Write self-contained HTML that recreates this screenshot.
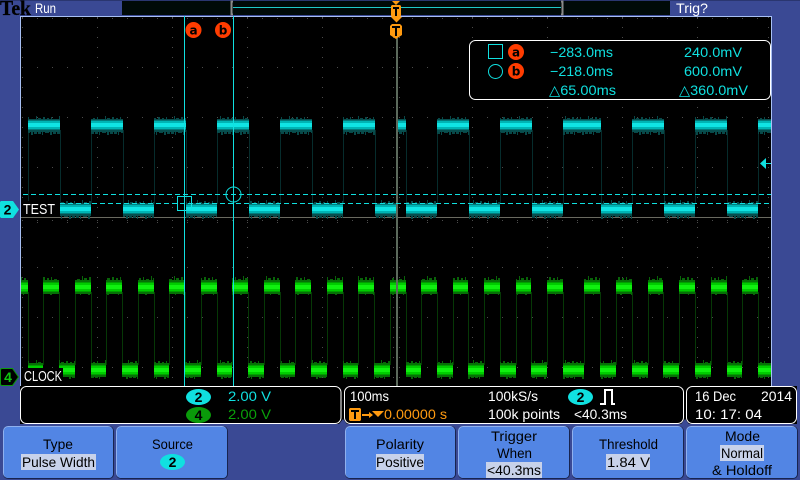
<!DOCTYPE html>
<html><head><meta charset="utf-8"><style>
html,body{margin:0;padding:0;background:#3a4994;width:800px;height:480px;overflow:hidden}
svg{display:block}
text{font-family:"Liberation Sans",sans-serif;font-size:14px}
</style></head><body>
<svg width="800" height="480" viewBox="0 0 800 480" xmlns="http://www.w3.org/2000/svg">
<defs>
<pattern id="nc" width="23" height="4" patternUnits="userSpaceOnUse"><rect x="1" y="2" width="2" height="2" fill="#084848"/><rect x="5" y="1" width="1" height="3" fill="#084848"/><rect x="8" y="3" width="3" height="1" fill="#084848"/><rect x="13" y="0" width="1" height="4" fill="#084848"/><rect x="15" y="2" width="3" height="2" fill="#084848"/><rect x="20" y="1" width="2" height="3" fill="#084848"/></pattern>
<pattern id="ncb" width="19" height="4" patternUnits="userSpaceOnUse"><rect x="0" y="0" width="3" height="2" fill="#084848"/><rect x="4" y="0" width="1" height="3" fill="#084848"/><rect x="7" y="0" width="4" height="1" fill="#084848"/><rect x="12" y="0" width="2" height="3" fill="#084848"/><rect x="15" y="0" width="3" height="2" fill="#084848"/></pattern>
<pattern id="ng" width="23" height="4" patternUnits="userSpaceOnUse"><rect x="1" y="2" width="2" height="2" fill="#086408"/><rect x="5" y="1" width="1" height="3" fill="#086408"/><rect x="8" y="3" width="3" height="1" fill="#086408"/><rect x="13" y="0" width="1" height="4" fill="#086408"/><rect x="15" y="2" width="3" height="2" fill="#086408"/><rect x="20" y="1" width="2" height="3" fill="#086408"/></pattern>
<pattern id="ngb" width="19" height="4" patternUnits="userSpaceOnUse"><rect x="0" y="0" width="3" height="2" fill="#086408"/><rect x="4" y="0" width="1" height="3" fill="#086408"/><rect x="7" y="0" width="4" height="1" fill="#086408"/><rect x="12" y="0" width="2" height="3" fill="#086408"/><rect x="15" y="0" width="3" height="2" fill="#086408"/></pattern>
<clipPath id="ch"><path d="M28 0H60V480H28ZM91 0H123V480H91ZM154 0H186V480H154ZM217 0H249V480H217ZM280 0H312V480H280ZM343 0H375V480H343ZM397 0H406V480H397ZM437 0H469V480H437ZM500 0H532V480H500ZM563 0H601V480H563ZM632 0H664V480H632ZM695 0H727V480H695ZM758 0H771V480H758Z"/></clipPath>
<clipPath id="cl"><path d="M60 0H91V480H60ZM123 0H154V480H123ZM186 0H217V480H186ZM249 0H280V480H249ZM312 0H343V480H312ZM375 0H397V480H375ZM406 0H437V480H406ZM469 0H500V480H469ZM532 0H563V480H532ZM601 0H632V480H601ZM664 0H695V480H664ZM727 0H758V480H727Z"/></clipPath>
<clipPath id="gh"><path d="M21 0H28V480H21ZM43 0H59V480H43ZM75 0H91V480H75ZM106 0H122V480H106ZM138 0H154V480H138ZM169 0H185V480H169ZM201 0H217V480H201ZM232 0H248V480H232ZM264 0H280V480H264ZM295 0H311V480H295ZM327 0H343V480H327ZM358 0H374V480H358ZM390 0H406V480H390ZM421 0H437V480H421ZM453 0H468V480H453ZM484 0H500V480H484ZM516 0H531V480H516ZM547 0H563V480H547ZM584 0H600V480H584ZM616 0H632V480H616ZM648 0H663V480H648ZM679 0H695V480H679ZM711 0H727V480H711ZM742 0H758V480H742Z"/></clipPath>
<clipPath id="gl"><path d="M28 0H43V480H28ZM59 0H75V480H59ZM91 0H106V480H91ZM122 0H138V480H122ZM154 0H169V480H154ZM185 0H201V480H185ZM217 0H232V480H217ZM248 0H264V480H248ZM280 0H295V480H280ZM311 0H327V480H311ZM343 0H358V480H343ZM374 0H390V480H374ZM406 0H421V480H406ZM437 0H453V480H437ZM468 0H484V480H468ZM500 0H516V480H500ZM531 0H547V480H531ZM563 0H584V480H563ZM600 0H616V480H600ZM632 0H648V480H632ZM663 0H679V480H663ZM695 0H711V480H695ZM727 0H742V480H727ZM758 0H771V480H758Z"/></clipPath>
</defs>

<rect width="800" height="480" fill="#3a4994"/>
<rect x="0" y="0" width="800" height="1" fill="#2a3670"/>

<!-- top record bar -->
<rect x="122" y="1" width="548" height="14" fill="#000a08"/>
<rect x="233" y="7" width="328" height="1" fill="#1fc8c8"/>
<path d="M233 1.5H231.5V14.5H233M561 1.5H562.5V14.5H561" fill="none" stroke="#8a8a8a" stroke-width="2"/>

<!-- screen -->
<rect x="20" y="16" width="752" height="371" fill="#000"/>
<rect x="20" y="16" width="752" height="1" fill="#a8c0f4"/>
<rect x="20" y="16" width="1" height="371" fill="#a8c0f4"/>
<rect x="771" y="16" width="1" height="371" fill="#a8c0f4"/>

<!-- graticule -->
<g fill="none" stroke="#4c4c4c" stroke-width="1">
<path stroke-dasharray="1 14" d="M22 18.5H771M22 67.5H771M22 117.5H771M22 167.5H771M22 267.5H771M22 317.5H771M22 367.5H771"/>
<path stroke-dasharray="1 9" d="M22.5 17V386M97.5 17V386M172.5 17V386M247.5 17V386M322.5 17V386M393.5 17V386M399.5 17V386M472.5 17V386M547.5 17V386M622.5 17V386M697.5 17V386M768.5 17V386"/>
<path stroke-dasharray="1 14" d="M22 220.5H771"/>
<path stroke-dasharray="1 29" d="M37 222.5H771"/>
</g>
<rect x="21" y="217" width="750" height="1" fill="#6a6a60"/>

<!-- edges -->
<path fill="none" stroke="#062c2c" d="M28.5 130V204M60.5 130V204M91.5 130V204M123.5 130V204M154.5 130V204M186.5 130V204M217.5 130V204M249.5 130V204M280.5 130V204M312.5 130V204M343.5 130V204M375.5 130V204M406.5 130V204M437.5 130V204M469.5 130V204M500.5 130V204M532.5 130V204M563.5 130V204M601.5 130V204M632.5 130V204M664.5 130V204M695.5 130V204M727.5 130V204M758.5 130V204"/>
<path fill="none" stroke="#063806" d="M28.5 292V365M43.5 292V365M59.5 292V365M75.5 292V365M91.5 292V365M106.5 292V365M122.5 292V365M138.5 292V365M154.5 292V365M169.5 292V365M185.5 292V365M201.5 292V365M217.5 292V365M232.5 292V365M248.5 292V365M264.5 292V365M280.5 292V365M295.5 292V365M311.5 292V365M327.5 292V365M343.5 292V365M358.5 292V365M374.5 292V365M390.5 292V365M406.5 292V365M421.5 292V365M437.5 292V365M453.5 292V365M468.5 292V365M484.5 292V365M500.5 292V365M516.5 292V365M531.5 292V365M547.5 292V365M563.5 292V365M584.5 292V365M600.5 292V365M616.5 292V365M632.5 292V365M648.5 292V365M663.5 292V365M679.5 292V365M695.5 292V365M711.5 292V365M727.5 292V365M742.5 292V365M758.5 292V365"/>

<!-- cyan high -->
<g clip-path="url(#ch)">
<rect x="20" y="116" width="752" height="4" fill="url(#nc)"/>
<rect x="20" y="132" width="752" height="4" fill="url(#ncb)"/>
<rect x="20" y="119" width="752" height="13" fill="#074e4e"/>
<rect x="20" y="120" width="752" height="10" fill="#007c7c"/>
<rect x="20" y="121" width="752" height="8" fill="#00b4b4"/>
<rect x="20" y="123" width="752" height="4" fill="#10e4e4"/>
</g>
<!-- cyan low -->
<g clip-path="url(#cl)">
<rect x="20" y="200" width="752" height="4" fill="url(#nc)"/>
<rect x="20" y="216" width="752" height="4" fill="url(#ncb)"/>
<rect x="20" y="203" width="752" height="13" fill="#074e4e"/>
<rect x="20" y="204" width="752" height="10" fill="#007c7c"/>
<rect x="20" y="205" width="752" height="8" fill="#00b4b4"/>
<rect x="20" y="207" width="752" height="4" fill="#10e4e4"/>
</g>
<!-- green high -->
<g clip-path="url(#gh)">
<rect x="21" y="276" width="750" height="4" fill="url(#ng)"/>
<rect x="21" y="292" width="750" height="4" fill="url(#ngb)"/>
<rect x="21" y="280" width="750" height="14" fill="#067006"/>
<rect x="21" y="282" width="750" height="10" fill="#00a000"/>
<rect x="21" y="283" width="750" height="8" fill="#00cc00"/>
<rect x="21" y="285" width="750" height="4" fill="#10f010"/>
</g>
<!-- green low -->
<g clip-path="url(#gl)">
<rect x="21" y="360" width="750" height="4" fill="url(#ng)"/>
<rect x="21" y="376" width="750" height="4" fill="url(#ngb)"/>
<rect x="21" y="363" width="750" height="14" fill="#067006"/>
<rect x="21" y="365" width="750" height="10" fill="#00a000"/>
<rect x="21" y="366" width="750" height="8" fill="#00cc00"/>
<rect x="21" y="368" width="750" height="4" fill="#10f010"/>
</g>

<!-- centre vertical -->
<rect x="396" y="38" width="2" height="348" fill="#5c6a5c"/>

<!-- cursors -->
<rect x="184" y="16" width="1" height="370" fill="#10e0e0"/>
<rect x="233" y="16" width="1" height="370" fill="#10e0e0"/>
<path fill="none" stroke="#10e0e0" stroke-dasharray="5 3" d="M23 194.5H771M60 203.5H771"/>
<rect x="177.5" y="196.5" width="14" height="14" fill="none" stroke="#10e0e0"/>
<circle cx="233.5" cy="194.5" r="7.5" fill="none" stroke="#10e0e0"/>

<!-- cursor badges -->
<circle cx="193.5" cy="30" r="8" fill="#ff3c00"/>
<text x="193.5" y="34.5" text-anchor="middle" style="font-family:'DejaVu Sans',sans-serif;font-size:12px;font-weight:bold" fill="#000">a</text>
<circle cx="223" cy="30" r="8" fill="#ff3c00"/>
<text x="223" y="34.5" text-anchor="middle" style="font-family:'DejaVu Sans',sans-serif;font-size:12px;font-weight:bold" fill="#000">b</text>

<!-- trigger markers -->
<path fill="#ff9a10" d="M392 1H400L396 5ZM392 5H400L401 6V16L400 17H392L391 16V6ZM391 17H402L396.5 22.5Z"/>
<path fill="#000" d="M393 7H399V9H397V16H395V9H393Z"/>
<path fill="#ff9a10" d="M392 24H400L402 26V35L396 39L390 35V26Z"/>
<path fill="#000" d="M392 26H400V28H397V36H395V28H392Z"/>

<!-- readout -->
<rect x="469.5" y="40.5" width="301" height="59" rx="6" fill="#000" stroke="#fff"/>
<rect x="488.5" y="44.5" width="14" height="14" fill="none" stroke="#10e0e0"/>
<circle cx="495.5" cy="71.5" r="7" fill="none" stroke="#10e0e0"/>
<circle cx="516" cy="52" r="8" fill="#ff3c00"/>
<text x="516" y="56.5" text-anchor="middle" style="font-family:'DejaVu Sans',sans-serif;font-size:12px;font-weight:bold" fill="#000">a</text>
<circle cx="516" cy="71" r="8" fill="#ff3c00"/>
<text x="516" y="75.5" text-anchor="middle" style="font-family:'DejaVu Sans',sans-serif;font-size:12px;font-weight:bold" fill="#000">b</text>
<g fill="#10e0e0">
<text x="550" y="57" textLength="63" lengthAdjust="spacingAndGlyphs">−283.0ms</text>
<text x="550" y="76" textLength="63" lengthAdjust="spacingAndGlyphs">−218.0ms</text>
<text x="549" y="95" textLength="67" lengthAdjust="spacingAndGlyphs">△65.00ms</text>
<text x="684" y="57" textLength="58" lengthAdjust="spacingAndGlyphs">240.0mV</text>
<text x="684" y="76" textLength="58" lengthAdjust="spacingAndGlyphs">600.0mV</text>
<text x="679" y="95" textLength="69" lengthAdjust="spacingAndGlyphs">△360.0mV</text>
</g>

<!-- trigger level arrow -->
<path fill="#10e0e0" d="M760 163.5L766 158V169ZM766 163H771V164H766Z"/>

<!-- channel labels -->
<rect x="22" y="201" width="37" height="15" fill="#000"/>
<rect x="22" y="368" width="41" height="15" fill="#000"/>
<path fill="#10e0e0" d="M1 201H13L19 209.5L13 218H1L0 217V202Z"/>
<text x="7.5" y="214.5" text-anchor="middle" style="font-size:14px;font-weight:bold" fill="#000">2</text>
<path fill="#000" stroke="#0a9a0a" d="M1.5 368.5H12.5L18.5 377L12.5 385.5H1.5L.5 384.5V369.5Z"/>
<text x="8" y="382" text-anchor="middle" style="font-size:14px;font-weight:bold" fill="#10c810">4</text>
<text x="23" y="214" textLength="32" lengthAdjust="spacingAndGlyphs" style="font-size:15px" fill="#fff">TEST</text>
<text x="24" y="381" textLength="38" lengthAdjust="spacingAndGlyphs" style="font-size:15px" fill="#fff">CLOCK</text>

<!-- status boxes -->
<rect x="20" y="386" width="777" height="38" fill="#000"/>
<rect x="20.5" y="386.5" width="320.5" height="37" rx="6" fill="#000" stroke="#fff"/>
<rect x="344.5" y="386.5" width="339" height="37" rx="6" fill="#000" stroke="#fff"/>
<rect x="686.5" y="386.5" width="110" height="37" rx="6" fill="#000" stroke="#fff"/>
<path fill="#3a4994" d="M343 419L347 424H339ZM685 419L689 424H681Z"/>
<rect x="20" y="424" width="780" height="2" fill="#3a4994"/>

<ellipse cx="198.5" cy="397" rx="12.5" ry="8" fill="#10e0e0"/>
<text x="198.5" y="402" text-anchor="middle" style="font-weight:bold" fill="#000">2</text>
<ellipse cx="198.5" cy="415" rx="12.5" ry="8" fill="#0a9a0a"/>
<text x="198.5" y="420" text-anchor="middle" style="font-weight:bold" fill="#000">4</text>
<text x="228" y="401" textLength="43" lengthAdjust="spacingAndGlyphs" fill="#10e0e0">2.00 V</text>
<text x="228" y="419" textLength="43" lengthAdjust="spacingAndGlyphs" fill="#0aa00a">2.00 V</text>

<text x="350" y="401" textLength="39" lengthAdjust="spacingAndGlyphs" fill="#fff">100ms</text>
<path fill="#ff9a10" d="M350 408H360L361 409V420L360 421H350L349 420V409Z"/>
<path fill="#000" d="M351 410H359V412H356V419H354V412H351Z"/>
<path fill="#ff9a10" d="M362 414H369V412L373 415L369 418V416H362ZM372 411H384L378 417Z"/>
<text x="384" y="419" textLength="63" lengthAdjust="spacingAndGlyphs" fill="#ff9a10">0.00000 s</text>
<text x="488" y="401" textLength="50" lengthAdjust="spacingAndGlyphs" fill="#fff">100kS/s</text>
<text x="488" y="419" textLength="72" lengthAdjust="spacingAndGlyphs" fill="#fff">100k points</text>
<ellipse cx="580.5" cy="397" rx="12.5" ry="8" fill="#10e0e0"/>
<text x="580.5" y="402" text-anchor="middle" style="font-weight:bold" fill="#000">2</text>
<path fill="none" stroke="#fff" stroke-width="2" d="M600 404H605V390H612V404H615"/>
<text x="574" y="419" textLength="53" lengthAdjust="spacingAndGlyphs" fill="#fff">&lt;40.3ms</text>

<text x="695" y="401" textLength="41" lengthAdjust="spacingAndGlyphs" fill="#fff">16 Dec</text>
<text x="761" y="401" textLength="31" lengthAdjust="spacingAndGlyphs" fill="#fff">2014</text>
<text x="695" y="419" textLength="67" lengthAdjust="spacingAndGlyphs" fill="#fff">10: 17: 04</text>

<!-- buttons -->
<g>
<rect x="3" y="426" width="111" height="53" rx="5" fill="#18244f"/><rect x="3" y="426" width="110" height="52" rx="5" fill="#8fb0ee"/><rect x="4" y="427" width="109" height="51" rx="4" fill="#5285e4"/>
<rect x="116" y="426" width="112" height="53" rx="5" fill="#18244f"/><rect x="116" y="426" width="111" height="52" rx="5" fill="#8fb0ee"/><rect x="117" y="427" width="110" height="51" rx="4" fill="#5285e4"/>
<rect x="345" y="426" width="111" height="53" rx="5" fill="#18244f"/><rect x="345" y="426" width="110" height="52" rx="5" fill="#8fb0ee"/><rect x="346" y="427" width="109" height="51" rx="4" fill="#5285e4"/>
<rect x="458" y="426" width="112" height="53" rx="5" fill="#18244f"/><rect x="458" y="426" width="111" height="52" rx="5" fill="#8fb0ee"/><rect x="459" y="427" width="110" height="51" rx="4" fill="#5285e4"/>
<rect x="572" y="426" width="112" height="53" rx="5" fill="#18244f"/><rect x="572" y="426" width="111" height="52" rx="5" fill="#8fb0ee"/><rect x="573" y="427" width="110" height="51" rx="4" fill="#5285e4"/>
<rect x="686" y="426" width="112" height="53" rx="5" fill="#18244f"/><rect x="686" y="426" width="111" height="52" rx="5" fill="#8fb0ee"/><rect x="687" y="427" width="110" height="51" rx="4" fill="#5285e4"/>
</g>
<g fill="#c8d2ea">
<rect x="21" y="454" width="75" height="16"/>
<rect x="376" y="454" width="48" height="16"/>
<rect x="486" y="462" width="56" height="16"/>
<rect x="606" y="454" width="44" height="16"/>
<rect x="720" y="445" width="44" height="16"/>
</g>
<ellipse cx="172.5" cy="462" rx="12.5" ry="8" fill="#10e0e0"/>
<text x="172.5" y="467" text-anchor="middle" style="font-weight:bold" fill="#000">2</text>
<g fill="#000">
<text x="43" y="449" textLength="30" lengthAdjust="spacingAndGlyphs">Type</text>
<text x="22" y="467" textLength="73" lengthAdjust="spacingAndGlyphs">Pulse Width</text>
<text x="152" y="449" textLength="41" lengthAdjust="spacingAndGlyphs">Source</text>
<text x="376" y="449" textLength="48" lengthAdjust="spacingAndGlyphs">Polarity</text>
<text x="376" y="467" textLength="48" lengthAdjust="spacingAndGlyphs">Positive</text>
<text x="491" y="441" textLength="46" lengthAdjust="spacingAndGlyphs">Trigger</text>
<text x="497" y="458" textLength="35" lengthAdjust="spacingAndGlyphs">When</text>
<text x="487" y="475" textLength="54" lengthAdjust="spacingAndGlyphs">&lt;40.3ms</text>
<text x="599" y="449" textLength="59" lengthAdjust="spacingAndGlyphs">Threshold</text>
<text x="607" y="467" textLength="43" lengthAdjust="spacingAndGlyphs">1.84 V</text>
<text x="725" y="441" textLength="35" lengthAdjust="spacingAndGlyphs">Mode</text>
<text x="721" y="458" textLength="42" lengthAdjust="spacingAndGlyphs">Normal</text>
<text x="712" y="475" textLength="60" lengthAdjust="spacingAndGlyphs">&amp; Holdoff</text>
</g>

<!-- header text -->
<text x="0" y="15" textLength="31" lengthAdjust="spacingAndGlyphs" style="font-family:'Liberation Serif',serif;font-size:21px;font-weight:bold" fill="#000" stroke="#000" stroke-width=".3">Tek</text>
<text x="35" y="13" textLength="21" lengthAdjust="spacingAndGlyphs" fill="#fff">Run</text>
<text x="676" y="13" textLength="32" lengthAdjust="spacingAndGlyphs" fill="#fff">Trig?</text>
</svg>
</body></html>
